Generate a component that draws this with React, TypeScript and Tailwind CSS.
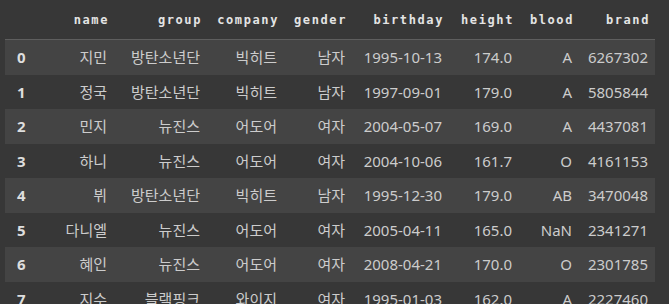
import React from 'react';

const columns = ['name', 'group', 'company', 'gender', 'birthday', 'height', 'blood', 'brand'];

const rows: string[][] = [
  ['지민', '방탄소년단', '빅히트', '남자', '1995-10-13', '174.0', 'A', '6267302'],
  ['정국', '방탄소년단', '빅히트', '남자', '1997-09-01', '179.0', 'A', '5805844'],
  ['민지', '뉴진스', '어도어', '여자', '2004-05-07', '169.0', 'A', '4437081'],
  ['하니', '뉴진스', '어도어', '여자', '2004-10-06', '161.7', 'O', '4161153'],
  ['뷔', '방탄소년단', '빅히트', '남자', '1995-12-30', '179.0', 'AB', '3470048'],
  ['다니엘', '뉴진스', '어도어', '여자', '2005-04-11', '165.0', 'NaN', '2341271'],
  ['혜인', '뉴진스', '어도어', '여자', '2008-04-21', '170.0', 'O', '2301785'],
  ['지수', '블랙핑크', '와이지', '여자', '1995-01-03', '162.0', 'A', '2227460'],
];

const grid = 'grid grid-cols-[51px_58px_93px_77px_68px_97px_70px_60px_76px]';

export default function App() {
  return (
    <div className="h-[304px] w-[669px] overflow-hidden bg-[#373737] pl-[5px]">
      <div className="w-[650px]">
        <div className={`${grid} h-[40px] items-end border-b border-[#5e5e5e] pb-[13px] font-['DejaVu_Sans_Mono',monospace] text-[12px] font-bold tracking-[1.6px] text-[#e4e4e4]`}>
          <div />
          {columns.map((c) => (
            <div key={c} className="pr-[5px] text-right leading-none">
              {c}
            </div>
          ))}
        </div>
        {rows.map((r, i) => (
          <div
            key={i}
            className={`${grid} h-[34.5px] items-center font-['Noto_Sans','Noto_Sans_CJK_KR',sans-serif] text-[15px] text-[#cccccc] ${
              i % 2 === 0 ? 'bg-[#444444]' : ''
            }`}
          >
            <div className="pl-[12px] font-bold text-[#dedede]">{i}</div>
            {r.map((v, j) => (
              <div key={j} className="whitespace-nowrap pr-[7px] text-right">
                {v}
              </div>
            ))}
          </div>
        ))}
      </div>
    </div>
  );
}
